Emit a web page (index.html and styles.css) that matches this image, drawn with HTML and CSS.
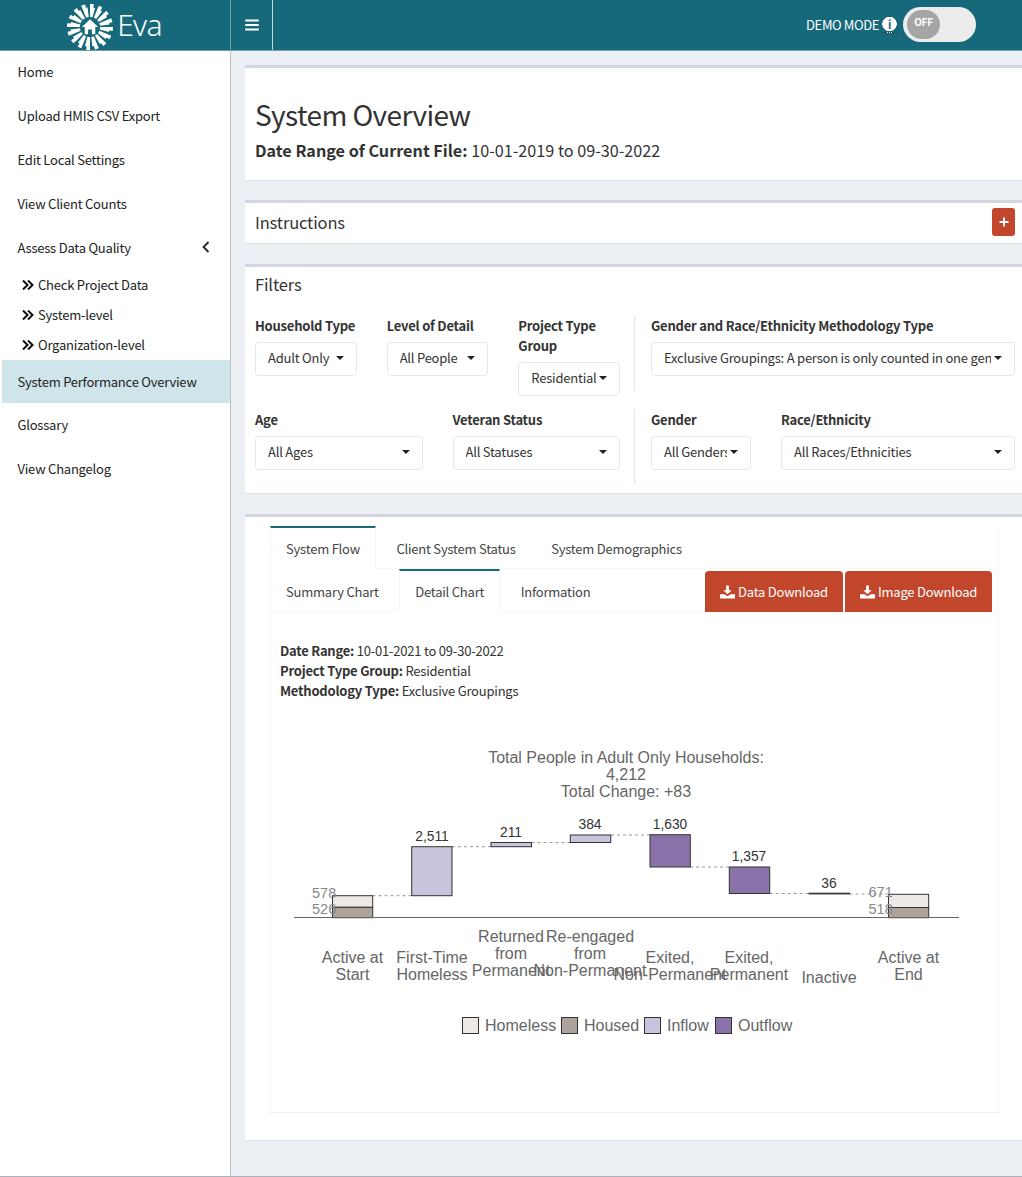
FILE: index.html
```html
<!DOCTYPE html>
<html lang="en">

<head>
  <meta charset="utf-8">
  <title>Eva</title>
  <link rel="stylesheet" href="styles.css">
</head>

<body>
  <header class="topbar">
    <a class="logo">
      <svg class="logo-mark" viewBox="0 0 48 48" width="46" height="46">
        <circle cx="24" cy="24" r="15.500" fill="none" stroke="#fff" stroke-width="10" pathLength="100" stroke-dasharray="4.200 2.050" />
        <circle cx="24" cy="24" r="22" fill="none" stroke="#fff" stroke-width="4" pathLength="100" stroke-dasharray="2.800 3.450" />
        <circle cx="24" cy="24" r="10" fill="#16697a" />
        <path d="M24 16L32.500 24H29.500V31.500H26V26.500H22V31.500H18.500V24H15.500Z" fill="#fff" />
      </svg>
      <span class="logo-text">Eva</span>
    </a>
    <a class="sidebar-toggle">
      <svg viewBox="0 0 14 12" width="14" height="12">
        <path d="M1 1.500H13M1 6H13M1 10.500H13" stroke="#fff" stroke-width="2" stroke-linecap="round" />
      </svg>
    </a>
    <div class="demo">
      <span class="demo-label">DEMO MODE</span>
      <span class="info-dot">i</span>
      <div class="switch"><span class="switch-knob">OFF</span></div>
    </div>
  </header>

  <div class="wrapper">
    <aside class="sidebar">
      <a class="menu-item">Home</a>
      <a class="menu-item">Upload HMIS CSV Export</a>
      <a class="menu-item">Edit Local Settings</a>
      <a class="menu-item">View Client Counts</a>
      <a class="menu-item">Assess Data Quality
        <svg class="menu-caret" viewBox="0 0 8 12" width="8" height="12">
          <path d="M6.500 1L1.500 6L6.500 11" fill="none" stroke="#222" stroke-width="1.800" />
        </svg>
      </a>
      <ul class="submenu">
        <li><svg viewBox="0 0 12 10" width="12" height="10"><path d="M1 0.500L5.500 5L1 9.500M6 0.500L10.500 5L6 9.500" fill="none" stroke="#111" stroke-width="2" /></svg>Check Project Data</li>
        <li><svg viewBox="0 0 12 10" width="12" height="10"><path d="M1 0.500L5.500 5L1 9.500M6 0.500L10.500 5L6 9.500" fill="none" stroke="#111" stroke-width="2" /></svg>System-level</li>
        <li><svg viewBox="0 0 12 10" width="12" height="10"><path d="M1 0.500L5.500 5L1 9.500M6 0.500L10.500 5L6 9.500" fill="none" stroke="#111" stroke-width="2" /></svg>Organization-level</li>
      </ul>
      <a class="menu-item active">System Performance Overview</a>
      <a class="menu-item">Glossary</a>
      <a class="menu-item">View Changelog</a>
    </aside>

    <main class="content">
      <section class="box box-title">
        <h2 class="page-title">System Overview</h2>
        <p class="date-range"><b>Date Range of Current File:</b> 10-01-2019 to 09-30-2022</p>
      </section>

      <section class="box box-instructions">
        <h3 class="box-heading">Instructions</h3>
        <button class="plus-btn">
          <svg viewBox="0 0 10 10" width="10" height="10"><path d="M5 0.500V9.500M0.500 5H9.500" stroke="#fff" stroke-width="1.800" /></svg>
        </button>
      </section>

      <section class="box box-filters">
        <h3 class="box-heading">Filters</h3>
        <div class="filter-row row-one">
          <div class="filter-left cols-3">
            <div class="field"><label>Household Type</label><div class="select"><span>Adult Only</span><i class="arrow"></i></div></div>
            <div class="field"><label>Level of Detail</label><div class="select"><span>All People</span><i class="arrow"></i></div></div>
            <div class="field"><label>Project Type Group</label><div class="select"><span>Residential</span><i class="arrow"></i></div></div>
          </div>
          <div class="filter-right">
            <div class="field"><label>Gender and Race/Ethnicity Methodology Type</label><div class="select"><span>Exclusive Groupings: A person is only counted in one gender and race/ethnicity group</span><i class="arrow"></i></div></div>
          </div>
        </div>
        <div class="filter-row row-two">
          <div class="filter-left cols-2">
            <div class="field"><label>Age</label><div class="select"><span>All Ages</span><i class="arrow"></i></div></div>
            <div class="field"><label>Veteran Status</label><div class="select"><span>All Statuses</span><i class="arrow"></i></div></div>
          </div>
          <div class="filter-right cols-gender">
            <div class="field"><label>Gender</label><div class="select"><span>All Genders</span><i class="arrow"></i></div></div>
            <div class="field"><label>Race/Ethnicity</label><div class="select"><span>All Races/Ethnicities</span><i class="arrow"></i></div></div>
          </div>
        </div>
      </section>

      <section class="box box-tabs">
        <div class="tabs tabs-outer">
          <a class="tab on">System Flow</a>
          <a class="tab">Client System Status</a>
          <a class="tab">System Demographics</a>
        </div>
        <div class="tabs tabs-inner">
          <a class="tab">Summary Chart</a>
          <a class="tab on">Detail Chart</a>
          <a class="tab">Information</a>
          <div class="downloads">
            <a class="dl-btn">
              <svg viewBox="0 0 16 14" width="15" height="14"><path d="M6.500 0H9.500V5H12.500L8 9.500L3.500 5H6.500ZM0 9.500H4.500L8 11.500L11.500 9.500H16V14H0Z" fill="#fff" /></svg>
              Data Download
            </a>
            <a class="dl-btn">
              <svg viewBox="0 0 16 14" width="15" height="14"><path d="M6.500 0H9.500V5H12.500L8 9.500L3.500 5H6.500ZM0 9.500H4.500L8 11.500L11.500 9.500H16V14H0Z" fill="#fff" /></svg>
              Image Download
            </a>
          </div>
        </div>
        <div class="pane">
          <p class="pane-meta"><b>Date Range:</b> 10-01-2021 to 09-30-2022<br>
            <b>Project Type Group:</b> Residential<br>
            <b>Methodology Type:</b> Exclusive Groupings</p>

          <svg class="chart" viewBox="270 740 729 372" width="729" height="372">
            <g class="chart-title">
              <text x="626" y="762.500">Total People in Adult Only Households:</text>
              <text x="626" y="779.500">4,212</text>
              <text x="626" y="796.500">Total Change: +83</text>
            </g>

            <path class="link" d="M372.500 895.700H411.700M452 846.700H491M531.500 842.500H570M611 835H650M690 867H729.300M769.700 893.500H809M849.500 894H888.500" />

            <g class="bar">
              <rect class="homeless" x="332.500" y="895.700" width="40.200" height="11.600" />
              <rect class="housed" x="332.500" y="907.300" width="40.200" height="10.400" />
              <rect class="inflow" x="411.700" y="846.700" width="40.300" height="49" />
              <rect class="inflow" x="491" y="842.500" width="40.500" height="4.200" />
              <rect class="inflow" x="570.300" y="835" width="40.500" height="7.500" />
              <rect class="outflow" x="650" y="834.700" width="40.300" height="32.300" />
              <rect class="outflow" x="729.300" y="867" width="40.400" height="26.500" />
              <rect class="outflow" x="809" y="893.200" width="40.500" height="0.700" />
              <rect class="homeless" x="888.500" y="894.300" width="40.200" height="13.200" />
              <rect class="housed" x="888.500" y="907.500" width="40.200" height="10.200" />
            </g>

            <path class="axis" d="M294 917.500H959" />

            <g class="count">
              <text x="432" y="841">2,511</text>
              <text x="511" y="837">211</text>
              <text x="590" y="829">384</text>
              <text x="670" y="829">1,630</text>
              <text x="749" y="861">1,357</text>
              <text x="829" y="888">36</text>
            </g>
            <g class="count-side">
              <text x="312" y="898">578</text>
              <text x="312" y="914">526</text>
              <text x="868.500" y="897">671</text>
              <text x="868.500" y="914">518</text>
            </g>

            <g class="tick">
              <text x="352.500" y="963">Active at</text>
              <text x="352.500" y="980">Start</text>
              <text x="432" y="963">First-Time</text>
              <text x="432" y="980">Homeless</text>
              <text x="511" y="942">Returned</text>
              <text x="511" y="959">from</text>
              <text x="511" y="976">Permanent</text>
              <text x="590" y="942">Re-engaged</text>
              <text x="590" y="959">from</text>
              <text x="590" y="976">Non-Permanent</text>
              <text x="670" y="963">Exited,</text>
              <text x="670" y="980">Non-Permanent</text>
              <text x="749" y="963">Exited,</text>
              <text x="749" y="980">Permanent</text>
              <text x="829" y="983">Inactive</text>
              <text x="908.500" y="963">Active at</text>
              <text x="908.500" y="980">End</text>
            </g>

            <g class="legend">
              <rect class="homeless" x="462.500" y="1017.500" width="16" height="16" />
              <text x="485" y="1031">Homeless</text>
              <rect class="housed" x="561.500" y="1017.500" width="16" height="16" />
              <text x="584" y="1031">Housed</text>
              <rect class="inflow" x="644.500" y="1017.500" width="16" height="16" />
              <text x="667" y="1031">Inflow</text>
              <rect class="outflow" x="715.500" y="1017.500" width="16" height="16" />
              <text x="738" y="1031">Outflow</text>
            </g>
          </svg>
        </div>
      </section>
    </main>
  </div>
</body>

</html>
```

FILE: styles.css
```css
* {
  box-sizing: border-box;
}

html,
body {
  height: 100%;
}

body {
  margin: 0;
  overflow: hidden;
  font-family: "Noto Sans CJK SC", "Noto Sans", sans-serif;
  font-size: 13px;
  letter-spacing: -0.220px;
  line-height: 20px;
  color: #333;
  background-color: #ecf0f5;
}

/* top bar */
.topbar {
  display: flex;
  align-items: stretch;
  height: 51px;
  background-color: #16697a;
  border-bottom: 1px solid #6f9fa9;
}

.logo {
  display: flex;
  align-items: center;
  justify-content: center;
  gap: 4px;
  width: 230px;
  padding-right: 1px;
  color: #fff;
}

.logo-mark {
  margin-top: 3px;
}

.logo-text {
  font-family: "Noto Sans", sans-serif;
  font-size: 30px;
  font-weight: 300;
  letter-spacing: -0.800px;
  line-height: 50px;
}

.sidebar-toggle {
  display: flex;
  align-items: center;
  justify-content: center;
  width: 43px;
  border-left: 1px solid #6f9fa9;
  border-right: 1px solid #c4d7db;
}

.demo {
  display: flex;
  align-items: center;
  margin-left: auto;
  padding-right: 46px;
  color: #fff;
}

.demo-label {
  margin-right: 3px;
  letter-spacing: -0.400px;
}

.info-dot {
  width: 15px;
  height: 16px;
  margin-right: 6px;
  border-bottom: 1px dotted #333;
  color: #16697a;
  font-size: 11px;
  font-weight: 700;
  line-height: 14px;
  text-align: center;
  background: radial-gradient(circle at 7.500px 7px, #fff 7px, transparent 7.500px);
}

.switch {
  width: 73px;
  height: 35px;
  margin-top: -2px;
  padding: 3px 0 0 4px;
  border-radius: 18px;
  background-color: #ececec;
}

.switch-knob {
  display: block;
  width: 33px;
  height: 29px;
  border-radius: 15px;
  background-color: #a5a5a5;
  color: #fff;
  font-size: 10px;
  font-weight: 700;
  line-height: 24px;
  text-align: center;
}

/* layout */
.wrapper {
  display: flex;
  height: calc(100% - 51px);
  border-bottom: 1px solid #aab1b8;
}

.sidebar {
  flex: 0 0 231px;
  padding-left: 2px;
  background-color: #fff;
  border-right: 1px solid #b9c0c7;
}

.menu-item {
  display: flex;
  align-items: center;
  height: 44px;
  padding-left: 15.500px;
  color: #222;
}

.menu-item:first-child {
  height: 43px;
  padding-bottom: 1px;
}

.menu-item.active {
  background-color: #d0e5ea;
  height: 43px;
}

.menu-caret {
  margin-left: auto;
  margin-right: 20px;
  margin-top: -3px;
}

.submenu {
  list-style-type: none;
  margin: 0;
  padding: 0 0 0 20px;
}

.submenu li {
  display: flex;
  align-items: center;
  gap: 4px;
  height: 30px;
  color: #222;
}

.content {
  flex: 1;
  min-width: 0;
  padding: 14px 0 0 14px;
}

/* boxes */
.box {
  position: relative;
  background-color: #fff;
  border-top: 3px solid #d2d6de;
  border-bottom: 1px solid #dfe2e7;
  margin-bottom: 20px;
}

.box-title {
  height: 116px;
  margin-bottom: 19px;
  padding: 30px 10px 0;
}

.page-title {
  margin: 0;
  font-size: 28px;
  font-weight: 400;
  letter-spacing: -0.600px;
  line-height: 33px;
  color: #333;
}

.date-range {
  margin: 7px 0 0;
  font-size: 16.200px;
  letter-spacing: 0;
  line-height: 24px;
}

.box-instructions {
  display: flex;
  align-items: center;
  justify-content: space-between;
  height: 44px;
  padding: 0 7px 2px 10px;
}

.box-heading {
  margin: 0;
  font-size: 16.500px;
  font-weight: 400;
  letter-spacing: -0.150px;
  line-height: 20px;
  color: #333;
}

.plus-btn {
  display: flex;
  align-items: center;
  justify-content: center;
  width: 23px;
  height: 28px;
  padding: 0;
  border: 0;
  border-radius: 3px;
  background-color: #c1462c;
}

.box-filters {
  height: 230px;
  padding: 7px 7px 0 10px;
}

.filter-row {
  display: flex;
}

.row-one {
  margin-top: 22px;
}

.row-two {
  margin-top: 14px;
}

.filter-left {
  display: grid;
  flex: 0 0 365px;
  column-gap: 30px;
  align-items: start;
}

.cols-3 {
  grid-template-columns: repeat(3, minmax(0, 1fr));
}

.cols-2 {
  grid-template-columns: repeat(2, minmax(0, 1fr));
}

.filter-right {
  flex: 1;
  min-width: 0;
  height: 74px;
  margin-left: 14px;
  padding-left: 16px;
  border-left: 1px solid #e4e8ec;
}

.filter-right .field {
  min-width: 0;
}

.cols-gender {
  display: grid;
  grid-template-columns: 100px minmax(0, 1fr);
  column-gap: 30px;
}

.field label {
  display: block;
  margin-bottom: 6px;
  font-weight: 700;
  color: #333;
}

.select {
  display: flex;
  align-items: center;
  height: 34px;
  padding: 0 12px 2px;
  border: 1px solid #deeaf0;
  border-radius: 4px;
  color: #333;
  background-color: #fff;
}

.select span {
  flex: 1;
  min-width: 0;
  overflow: hidden;
  white-space: nowrap;
}

.arrow {
  flex: none;
  width: 0;
  height: 0;
  margin-left: 3px;
  border-top: 4px solid #222;
  border-left: 4px solid transparent;
  border-right: 4px solid transparent;
}

/* tabs */
.box-tabs {
  height: 627px;
  padding: 9px 0 0 25px;
}

.tabs {
  display: flex;
  width: 729px;
  height: 43px;
  border: 1px solid #f8f8f8;
  border-top: 0;
}

.tab {
  display: flex;
  align-items: center;
  padding: 1px 15px 0;
  margin-right: 5.500px;
  border-top: 2px solid transparent;
  color: #444;
}

.tab.on {
  margin-bottom: -1px;
  margin-left: -1px;
  padding-top: 0;
  border-top-color: #16697a;
  border-left: 1px solid #f4f4f4;
  border-right: 1px solid #f4f4f4;
  background-color: #fff;
}

.tabs-inner .tab.on {
  margin-left: 0;
}

.downloads {
  display: flex;
  gap: 2px;
  margin-left: auto;
  margin-right: 6px;
  padding-top: 2px;
}

.dl-btn {
  display: flex;
  align-items: center;
  gap: 3px;
  justify-content: center;
  width: 138px;
  height: 41px;
  border-radius: 4px 4px 0 0;
  background-color: #c1462c;
  color: #fff;
}

.dl-btn+.dl-btn {
  width: 147px;
}

.pane {
  width: 729px;
  height: 501px;
  border: 1px solid #f8f8f8;
  border-top: 0;
  border-bottom-color: #eeeeee;
}

.pane-meta {
  margin: 0;
  padding: 29px 0 0 9px;
  height: 128px;
}

.chart {
  display: block;
  margin-left: -1px;
  font-family: "Liberation Sans", Arial, sans-serif;
  letter-spacing: 0;
}

.chart text {
  font-size: 16px;
  fill: #666;
}

.chart-title text,
.tick text,
.count text {
  text-anchor: middle;
}

.chart .count text {
  font-size: 13.800px;
  fill: #333;
}

.chart .count-side text {
  font-size: 14.500px;
  fill: #888;
}

.bar rect,
.legend rect {
  stroke: #333;
  stroke-width: 1;
}

.homeless {
  fill: #ede9e6;
}

.housed {
  fill: #aba39c;
}

.inflow {
  fill: #c8c4de;
}

.outflow {
  fill: #8a72ab;
}

.link {
  fill: none;
  stroke: #999;
  stroke-width: 1;
  stroke-dasharray: 3 3;
}

.axis {
  fill: none;
  stroke: #666;
  stroke-width: 1;
}
```
